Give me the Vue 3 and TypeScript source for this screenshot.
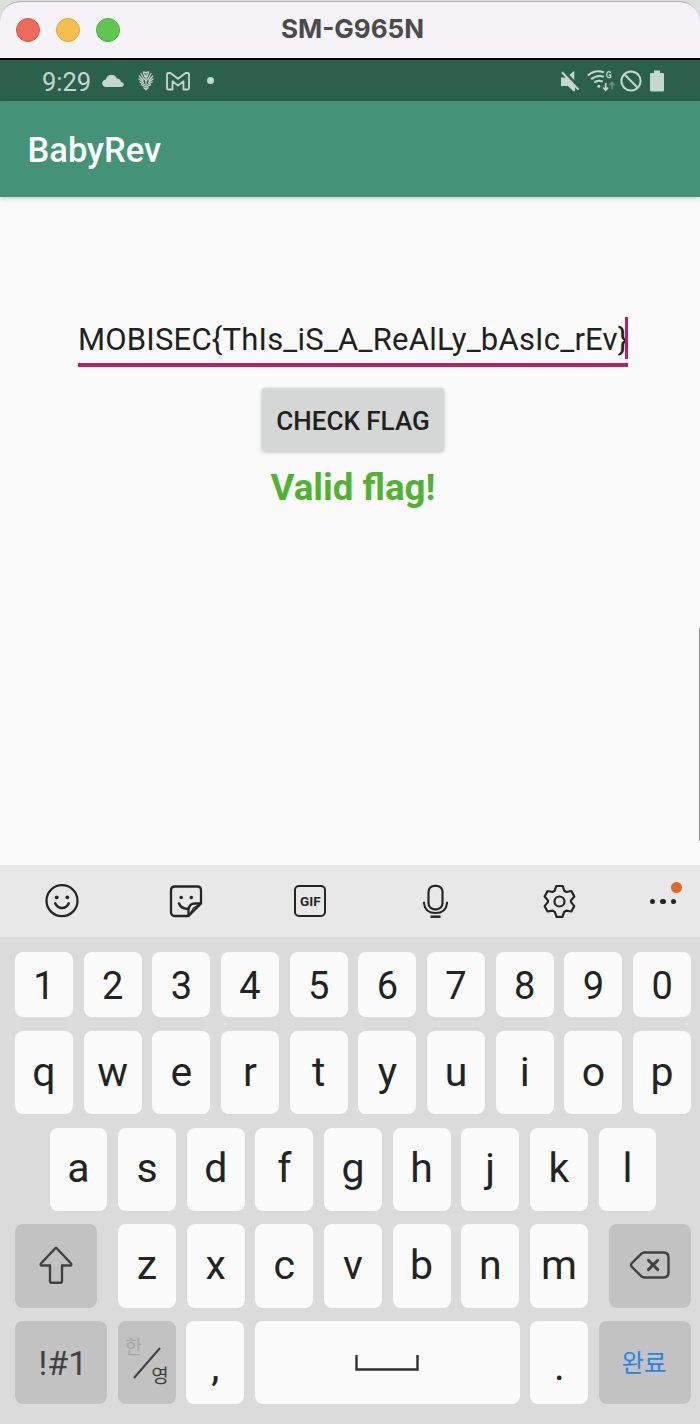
<script setup lang="ts">
const digits: string[] = [...'1234567890']
const topLetters: string[] = [...'qwertyuiop']
const homeLetters: string[] = [...'asdfghjkl']
const bottomLetters: string[] = [...'zxcvbnm']
</script>

<template>
  <div class="window">
    <header class="titlebar">
      <div class="lights">
        <span class="light red"></span>
        <span class="light amber"></span>
        <span class="light green"></span>
      </div>
      <span class="device">SM-G965N</span>
    </header>

    <div class="status">
      <span class="clock">9:29</span>
      <svg class="cloud" width="22" height="14" viewBox="0 0 22 14">
        <path d="M4.500 13C1.800 13 .2 11.400 .2 9.300 .2 7.300 1.700 5.800 3.800 5.500 4.600 2.600 6.700.7 9.500.7c2.700 0 4.500 1.400 5.400 3.800 2.300 0 3.800 1.400 4 3.400 1.800.1 2.900 1.100 2.900 2.600 0 1.500-1.100 2.500-2.700 2.500z" fill="currentColor" />
      </svg>
      <svg class="tree" width="16" height="20" viewBox="0 0 16 20" fill="none" stroke="currentColor" stroke-width="1.200" stroke-linecap="round">
        <path d="M5.300 1 7 6M8 3.500v4.500M10.700 1 9 6M3 2.500l2.800 5.500M13 2.500l-2.800 5.500M1.300 5 5 9.500M14.700 5 11 9.500M1 8 5.500 11.500M15 8l-4.500 3.500M1.800 11l4.500 2.500M14.200 11l-4.500 2.500M3.300 13.700l3.500 1.800M12.700 13.700l-3.500 1.800M8 10v9M5.800 16.700 8 18.500l2.200-1.800M6.500 8 8 10.500 9.500 8M5.300 1q1.500-.3 2.700 1.200Q9.200.7 10.700 1" />
      </svg>
      <svg class="mail" width="24" height="19" viewBox="0 0 24 19">
        <path d="M1 2.500Q1 1 2.500 1h1.300q.7 0 1.300.5L12 6.800l6.900-5.300q.6-.5 1.300-.5h1.300Q23 1 23 2.500V16q0 1.500-1.500 1.500h-4V9.300L12 13.600 6.500 9.300v8.200h-4Q1 17.500 1 16z" fill="none" stroke="currentColor" stroke-width="1.800" stroke-linejoin="round" />
      </svg>
      <span class="more-dot"></span>

      <svg class="mute" width="20" height="22" viewBox="0 0 20 22">
        <path d="M1 7.500h5l9 9V21.300h-1.600L7.800 16H1zM14.300.8v9.100L9.400 5z" fill="currentColor" />
        <path d="M2 2.300 18.500 19.600" stroke="currentColor" stroke-width="2" />
      </svg>
      <svg class="wifi" width="28" height="22" viewBox="0 0 28 22" fill="none" stroke="currentColor" stroke-width="2">
        <path d="M.8 5.400Q8.500-1 17 2.400M4.200 9.200Q10 4.300 16.800 6.700M7.200 12.500Q11 9.400 15.700 11.600" />
        <circle cx="11.800" cy="16.300" r="1.500" fill="currentColor" stroke="none" />
        <path d="M24 2.500q-3.800-2-4.300 1.400v1.300q.6 3.500 4 2V5h-2" stroke-width="1.300" />
        <path d="M18.700 13v6.500M16.200 17.500l2.500 2.800 2.500-2.800" stroke-width="1.700" />
        <path d="M25 19.500v-6M22.500 15.300l2.500-2.800 2.500 2.800" stroke-width="1.600" opacity=".4" />
      </svg>
      <svg class="blocked" width="22" height="22" viewBox="0 0 22 22" fill="none" stroke="currentColor" stroke-width="2">
        <circle cx="11" cy="11" r="9.600" />
        <path d="m4.300 4.300 13.400 13.400" />
      </svg>
      <svg class="battery" width="14" height="22" viewBox="0 0 14 22">
        <path d="M4 .5h6V3h2.800Q14 3 14 4.200v16q0 1.300-1.200 1.300H1.200Q0 21.500 0 20.200v-16Q0 3 1.200 3H4z" fill="currentColor" />
      </svg>
    </div>

    <div class="appbar"><span class="app-name">BabyRev</span></div>

    <main class="content">
      <div class="field">
        <span class="field-text">MOBISEC{ThIs_iS_A_ReAlLy_bAsIc_rEv}</span>
        <i class="caret"></i>
      </div>
      <button class="check"><span class="check-text">CHECK FLAG</span></button>
      <div class="result"><span class="result-text">Valid flag!</span></div>
      <i class="edge"></i>
    </main>

    <nav class="tools">
      <svg width="36" height="36" viewBox="0 0 36 36" fill="none" stroke="currentColor" stroke-width="2.300" stroke-linecap="round">
        <circle cx="18" cy="17.700" r="15.500" />
        <circle cx="12.700" cy="14.300" r="1.900" fill="currentColor" stroke="none" />
        <circle cx="23.300" cy="14.300" r="1.900" fill="currentColor" stroke="none" />
        <path d="M11.200 20.300c2.800 6.300 10.800 6.300 13.600 0" stroke-width="2.500" />
      </svg>
      <svg width="36" height="36" viewBox="0 0 36 36" fill="none" stroke="currentColor" stroke-width="2.300" stroke-linecap="round" stroke-linejoin="round">
        <path d="M20.500 33H7Q3 33 3 29V7.500Q3 3.500 7 3.500H29.500Q33 3.500 33 7.500V20.500z" />
        <path d="M20.500 32.500V27Q21 20.500 27 20.500H32.500" />
        <path d="m21.500 31.500 4-6.500 6.500-4" stroke-width="1.400" />
        <circle cx="13.200" cy="14.500" r="1.800" fill="currentColor" stroke="none" />
        <circle cx="23.300" cy="14.500" r="1.800" fill="currentColor" stroke="none" />
        <path d="M11 20.500q2.500 5.500 8.500 5.200" stroke-width="2.500" />
      </svg>
      <span class="gif">GIF</span>
      <svg width="36" height="36" viewBox="0 0 36 36" fill="none" stroke="currentColor" stroke-width="2.200">
        <rect x="11.500" y="2.800" width="14" height="23.500" rx="6" />
        <path d="M7 18.800v1.500C7.700 26.500 12 30 18.500 30s10.800-3.500 11.500-9.700v-1.500" stroke-width="2" />
        <path d="M13.500 33.700h10" stroke-width="2.500" />
      </svg>
      <svg width="36" height="36" viewBox="0 0 36 36" fill="none" stroke="currentColor" stroke-width="2.200" stroke-linejoin="round">
        <path d="M15.300 3h6.400l1.600 4.800 2 1.200 5-1 3 5.500-3.300 3.900v1.700l3.300 4-3 5.400-5-.8-2.200 1.200-1.600 4.900h-6l-1.700-4.900-2.200-1.200-5 .8-3-5.400 3.300-4v-1.700l-3.300-3.900 3-5.500 5 1 2-1.200z" />
        <circle cx="18.500" cy="18.500" r="5" />
      </svg>
      <div class="overflow">
        <i></i><i></i><i></i>
        <b class="notice"></b>
      </div>
    </nav>

    <section class="keyboard">
      <div class="row digits">
        <span v-for="key in digits" :key="key" class="key">{{ key }}</span>
      </div>
      <div class="row letters">
        <span v-for="key in topLetters" :key="key" class="key">{{ key }}</span>
      </div>
      <div class="row letters home">
        <span v-for="key in homeLetters" :key="key" class="key">{{ key }}</span>
      </div>
      <div class="row letters lower">
        <span class="key dark shift">
          <svg width="36" height="40" viewBox="0 0 36 40" fill="none" stroke="currentColor" stroke-width="2.400" stroke-linejoin="round">
            <path d="M17.300 3.300Q18 2.500 18.700 3.300L33 18.500Q33.800 20.500 32.500 20.500H24V36q0 1.700-1.700 1.700h-8.600Q12 37.700 12 36V20.500H3.500Q2.200 20.500 3 18.500z" />
          </svg>
        </span>
        <span v-for="key in bottomLetters" :key="key" class="key">{{ key }}</span>
        <span class="key dark erase">
          <svg width="42" height="30" viewBox="0 0 42 30" fill="none" stroke="currentColor" stroke-width="2.400" stroke-linejoin="round">
            <path d="M15.500 2.500H34.500Q39.500 2.500 39.500 7.500v15q0 5-5 5H15.500q-2 0-3.300-1.300L3 17q-2-2 0-4l9.200-9.200q1.300-1.300 3.300-1.300z" />
            <path d="m19.400 10.200 9.400 9.400m0-9.400-9.400 9.400" stroke-width="2.900" stroke-linecap="round" />
          </svg>
        </span>
      </div>
      <div class="row letters last">
        <span class="key dark symbols">!#1</span>
        <span class="key dark language">
          <span class="korean">한</span>
          <svg width="28" height="32" viewBox="0 0 28 32"><path d="M1 31 27 1" stroke="currentColor" stroke-width="2" /></svg>
          <span class="english">영</span>
        </span>
        <span class="key punct">,</span>
        <span class="key space">
          <svg width="64" height="18" viewBox="0 0 64 18"><path d="M1.500 1v14.500h61V1" fill="none" stroke="currentColor" stroke-width="2.400" /></svg>
        </span>
        <span class="key punct">.</span>
        <span class="key dark done">완료</span>
      </div>
    </section>
  </div>
</template>

<style>
body { margin: 0; }
</style>

<style scoped>
.window {
  width: 700px;
  height: 1424px;
  overflow: hidden;
  display: flex;
  flex-direction: column;
  background: #dcdedd;
  font-family: Roboto, "Liberation Sans", sans-serif;
}
svg { display: block; flex: none; }
.titlebar {
  box-sizing: border-box;
  height: 58px;
  margin-top: 1px;
  margin-bottom: -1px;
  flex: none;
  display: grid;
  grid-template-columns: 120px 1fr 131px;
  align-items: center;
  padding-left: 16px;
  background: #f5f3f8;
  border-top: 1px solid #b3b3b3;
  border-radius: 21px 21px 0 0;
}
.lights { display: flex; gap: 16px; margin-top: -2px; }
.light { box-sizing: border-box; width: 24px; height: 24px; border-radius: 50%; border: 1px solid; }
.red { background: #ed6a5e; border-color: #d8564b; }
.amber { background: #f5bf4f; border-color: #dca73c; }
.green { background: #61c554; border-color: #4cab3d; }
.device {
  text-align: center;
  font: 700 26px/40px Inter, sans-serif;
  color: #4b4a4d;
  margin-top: -4px;
}
.status {
  box-sizing: border-box;
  height: 43px;
  flex: none;
  border-top: 2px solid #000;
  background: #2b604b;
  color: #c4d8d0;
  display: flex;
  align-items: center;
  padding: 0 36px 0 42px;
  z-index: 1;
}
.clock { font-size: 25.500px; line-height: 40px; width: 60px; margin-top: 3px; }
.tree { margin-left: 14px; }
.mail { margin-left: 12px; margin-top: 1px; }
.more-dot { width: 7px; height: 7px; border-radius: 50%; background: currentColor; margin-left: 17px; margin-right: auto; }
.wifi { margin-left: 7px; }
.blocked { margin-left: 5px; }
.battery { margin-left: 8px; }
.appbar {
  box-sizing: border-box;
  height: 96px;
  flex: none;
  padding: 1px 0 0 27.500px;
  background: #449278;
  color: #fff;
  font-size: 34.500px;
  font-weight: 500;
  line-height: 96px;
  box-shadow: 0 1px 5px rgba(0, 0, 0, .22);
  z-index: 1;
}
.content {
  position: relative;
  box-sizing: border-box;
  height: 668px;
  flex: none;
  background: #fafafa;
  display: flex;
  flex-direction: column;
  align-items: center;
  padding: 120px 0 0 6px;
}
.field {
  position: relative;
  box-sizing: border-box;
  width: 550px;
  height: 50px;
  border-bottom: 4px solid #b9215e;
  color: #212121;
  font-size: 31px;
  letter-spacing: .21px;
  line-height: 46px;
  white-space: nowrap;
}
.caret { position: absolute; right: 0; top: 0; width: 3px; height: 42px; background: #b9215e; }
.check {
  width: 182px;
  height: 63px;
  margin: 21px 0 0;
  padding: 3px 0 0;
  border: 0;
  border-radius: 3px;
  background: #d5d7d6;
  box-shadow: 0 1px 4px rgba(0, 0, 0, .24);
  color: #1e2120;
  font: 500 26px/60px Roboto, sans-serif;
  white-space: nowrap;
}
.result { margin-top: 14px; color: #51b232; font-size: 36.700px; font-weight: 700; line-height: 46px; }
.edge { position: absolute; right: 0; top: 431px; width: 1px; height: 213px; background: #929292; }
.tools {
  box-sizing: border-box;
  height: 72px;
  flex: none;
  background: #e8e8e8;
  color: #252525;
  display: flex;
  align-items: center;
  gap: 88.200px;
  padding: 0 0 0 44px;
}
.gif {
  box-sizing: border-box;
  width: 32px;
  height: 32px;
  flex: none;
  margin: 0 2px;
  border: 2.400px solid;
  border-radius: 5px;
  text-align: center;
  font-size: 13.500px;
  font-weight: 700;
  line-height: 29px;
}
.overflow { position: relative; display: flex; gap: 5px; margin: 1px 0 0 -15px; }
.overflow i { width: 5.500px; height: 5.500px; border-radius: 50%; background: currentColor; }
.notice { position: absolute; left: 21px; top: -17px; width: 11px; height: 11px; border-radius: 50%; background: #dc6a2d; }
.keyboard {
  flex: 1;
  background: #dbdbdb;
  padding: 14.500px 9px 0 15px;
  display: flex;
  flex-direction: column;
  gap: 13.700px;
  color: #222423;
}
.row { display: flex; gap: 10.670px; }
.key {
  box-sizing: border-box;
  flex: 1 1 0;
  display: flex;
  align-items: center;
  justify-content: center;
  border-radius: 8px;
  background: #fbfbfb;
  min-width: 0;
}
.digits .key { height: 65.500px; font-size: 38px; padding-top: 4px; }
.letters .key { height: 83.200px; font-size: 41px; padding-bottom: 1px; }
.home { padding: 0 34.500px; }
.home .key { padding-bottom: 3px; }
.lower .key { flex: none; width: 58px; padding-bottom: 2px; }
.lower .dark { width: 82px; background: #c2c2c2; color: #414141; }
.lower .shift { margin-right: 10.300px; }
.lower .erase { margin-left: 10.300px; }
.last .key { flex: none; width: 58px; height: 82.700px; padding-bottom: 0; }
.last .dark { background: #c2c2c2; color: #414141; }
.last .symbols { width: 92px; font-size: 34px; padding-left: 4px; }
.last .space { flex: 1; color: #303030; }
.last .punct { padding-top: 6px; }
.last .done { width: 92px; padding-bottom: 3px; padding-right: 2px; color: #2b82e6; font: 400 24.500px "Noto Sans CJK KR", sans-serif; }
.last .language { position: relative; }
.korean, .english { position: absolute; font: 400 19px/24px "Noto Sans CJK KR", sans-serif; }
.korean { left: 7px; top: 13px; color: #a6a6a6; }
.english { right: 7px; bottom: 17px; }
</style>
